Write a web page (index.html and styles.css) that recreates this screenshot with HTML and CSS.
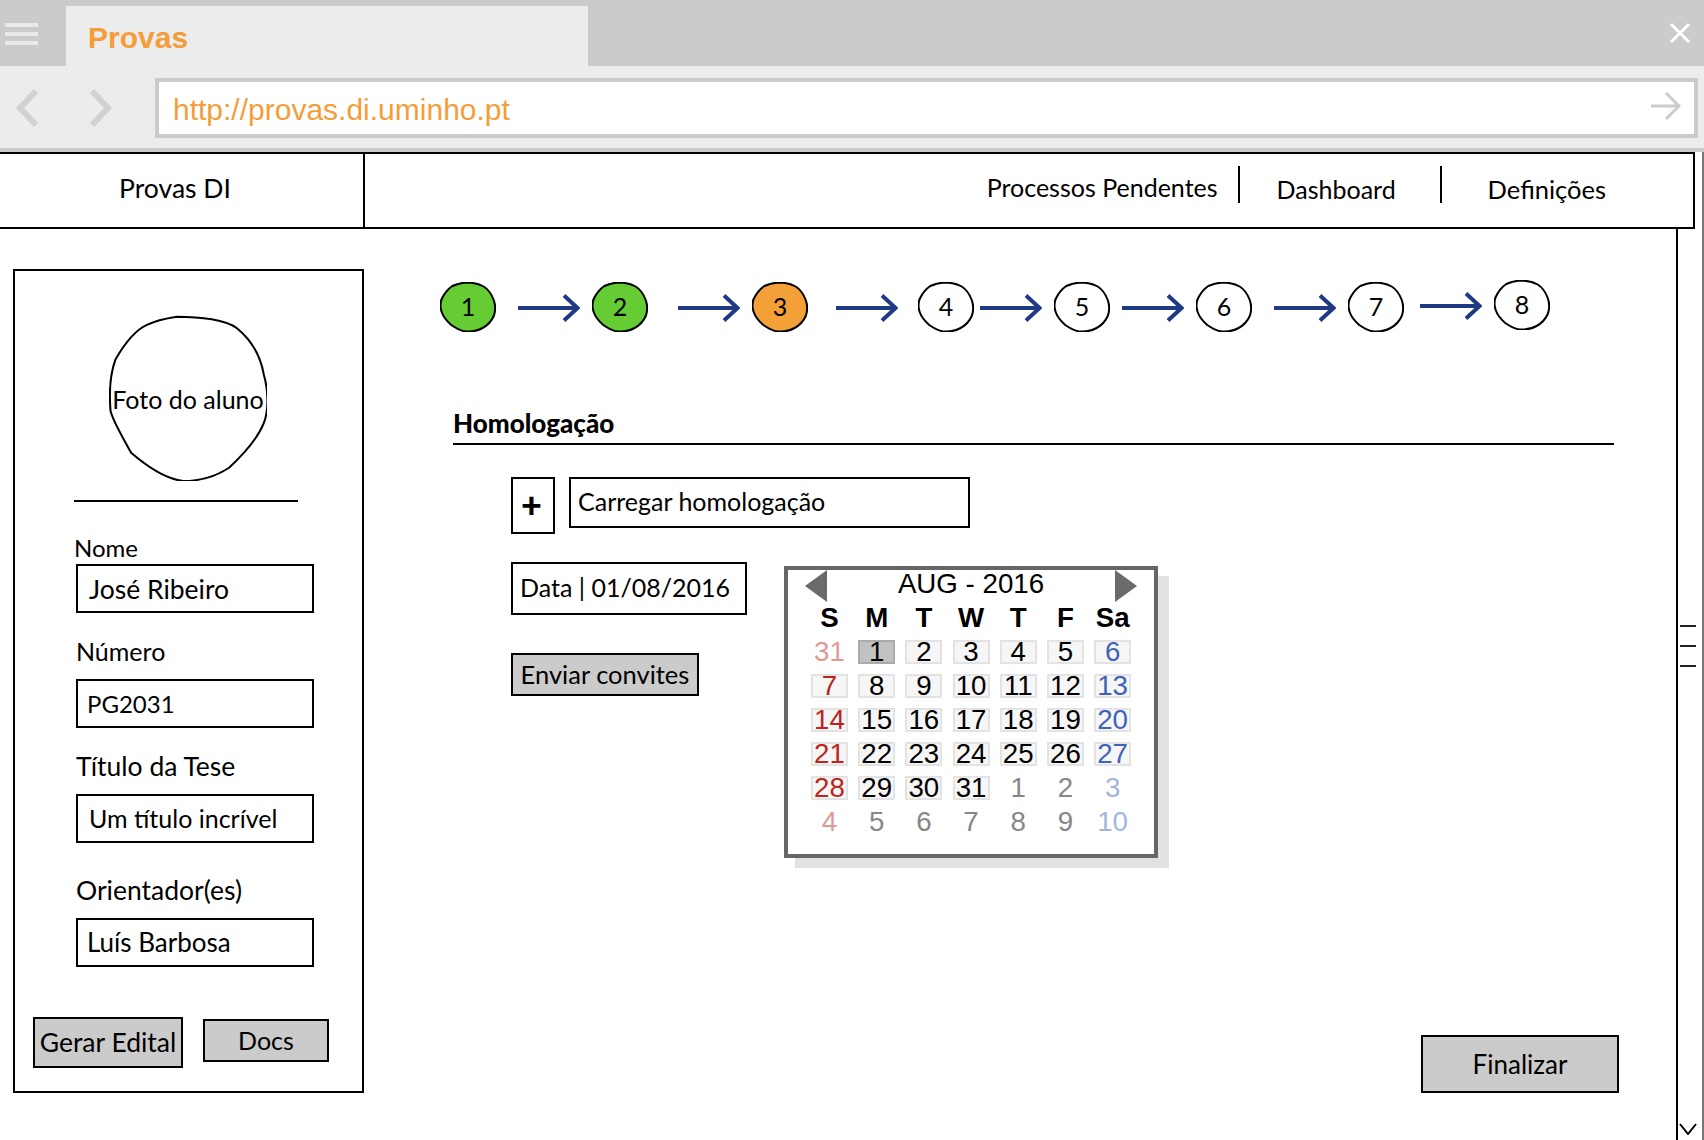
FILE: index.html
```html
<!DOCTYPE html>
<html lang="en">
<head>
    <meta charset="UTF-8">
    <meta name="viewport" content="width=device-width, initial-scale=1.0">
    <title>Provas</title>
    <link rel="stylesheet" href="styles.css">
</head>
<body>
    <svg class="defs" width="0" height="0">
        <symbol id="blob" viewBox="0 0 100 100" preserveAspectRatio="none">
            <path d="M43 1 C58 1 74 3 81 8 C90 15 96 25 98 36 C101 46 101 58 98 65 C94 75 85 84 76 92 C68 97 58 100 47 100 C37 99 25 92 14 83 C9 74 3 65 1 58 C0 47 1 35 4 27 C10 17 17 9 24 6 C30 3 36 2 43 1 Z" vector-effect="non-scaling-stroke"/>
        </symbol>
        <symbol id="dot" viewBox="0 0 100 100" preserveAspectRatio="none">
            <path d="M46 1 C58 1 70 4 78 9 C85 14 92 24 96 36 C99 46 100 56 96 68 C92 78 86 86 76 92 C68 97 58 100 46 99 C38 98 28 92 20 86 C12 78 6 70 3 60 C0 50 0 42 3 34 C8 22 14 14 22 8 C30 4 38 2 46 1 Z" vector-effect="non-scaling-stroke"/>
        </symbol>
        <symbol id="arrow" viewBox="0 0 62 28">
            <path d="M0 14 H59 M46 1.5 L59.5 14 L46 26.5" fill="none" stroke="#1f3a85" stroke-width="4"/>
        </symbol>
    </svg>

    <header class="browser">
        <div class="tabbar">
            <div class="menu"><span></span><span></span><span></span></div>
            <div class="tab">Provas</div>
            <svg class="close" width="22" height="22" viewBox="0 0 22 22">
                <path d="M2 2 L20 20 M20 2 L2 20" stroke="#fff" stroke-width="3"/>
            </svg>
        </div>
        <div class="toolbar">
            <svg class="nav-btn" width="24" height="38" viewBox="0 0 24 38">
                <path d="M21 2 L5 19 L21 36" fill="none" stroke="#d2d2d2" stroke-width="6"/>
            </svg>
            <svg class="nav-btn next" width="24" height="38" viewBox="0 0 24 38">
                <path d="M3 2 L19 19 L3 36" fill="none" stroke="#d2d2d2" stroke-width="6"/>
            </svg>
            <div class="address">
                <span class="url">http://provas.di.uminho.pt</span>
                <svg class="go" width="30" height="30" viewBox="0 0 30 30">
                    <path d="M0 15 H27 M15 2 L28 15 L15 28" fill="none" stroke="#ccc" stroke-width="3"/>
                </svg>
            </div>
        </div>
    </header>

    <div class="frame">
        <div class="scrollbar">
            <div class="grip"><span></span><span></span><span></span></div>
            <svg class="scroll-down" width="18" height="12" viewBox="0 0 18 12">
                <path d="M1 1 L9 11 L17 1" fill="none" stroke="#000" stroke-width="2"/>
            </svg>
        </div>

        <nav class="topnav">
            <div class="brand">Provas DI</div>
            <div class="links">
                <a class="link link-first">Processos Pendentes</a>
                <a class="link link-dash">Dashboard</a>
                <a class="link link-last">Definições</a>
            </div>
        </nav>

        <div class="content">
            <aside class="sidebar">
                <div class="photo">
                    <svg class="shape"><use href="#blob"/></svg>
                    <span>Foto do aluno</span>
                </div>
                <div class="rule"></div>

                <div class="field field-first">
                    <label class="small">Nome</label>
                    <div class="box large">José Ribeiro</div>
                </div>
                <div class="field">
                    <label>Número</label>
                    <div class="box small">PG2031</div>
                </div>
                <div class="field">
                    <label class="large">Título da Tese</label>
                    <div class="box">Um título incrível</div>
                </div>
                <div class="field field-last">
                    <label class="large">Orientador(es)</label>
                    <div class="box luis">Luís Barbosa</div>
                </div>

                <div class="side-buttons">
                    <button class="btn btn-edital">Gerar Edital</button>
                    <button class="btn btn-docs">Docs</button>
                </div>
            </aside>

            <main class="main">
                <div class="steps">
                    <div class="step done"><svg class="shape"><use href="#dot"/></svg><span>1</span></div>
                    <svg class="step-arrow a1"><use href="#arrow"/></svg>
                    <div class="step done"><svg class="shape"><use href="#dot"/></svg><span>2</span></div>
                    <svg class="step-arrow a2"><use href="#arrow"/></svg>
                    <div class="step current"><svg class="shape"><use href="#dot"/></svg><span>3</span></div>
                    <svg class="step-arrow a3"><use href="#arrow"/></svg>
                    <div class="step"><svg class="shape"><use href="#dot"/></svg><span>4</span></div>
                    <svg class="step-arrow a4"><use href="#arrow"/></svg>
                    <div class="step"><svg class="shape"><use href="#dot"/></svg><span>5</span></div>
                    <svg class="step-arrow a5"><use href="#arrow"/></svg>
                    <div class="step"><svg class="shape"><use href="#dot"/></svg><span>6</span></div>
                    <svg class="step-arrow a6"><use href="#arrow"/></svg>
                    <div class="step"><svg class="shape"><use href="#dot"/></svg><span>7</span></div>
                    <svg class="step-arrow a7 raised"><use href="#arrow"/></svg>
                    <div class="step raised"><svg class="shape"><use href="#dot"/></svg><span>8</span></div>
                </div>

                <h2 class="section-title">Homologação</h2>

                <div class="upload">
                    <div class="plus">+</div>
                    <div class="box upload-name">Carregar homologação</div>
                </div>

                <div class="schedule">
                    <div class="schedule-left">
                        <div class="box date-box">Data | 01/08/2016</div>
                        <button class="btn btn-send">Enviar convites</button>
                    </div>

                    <div class="calendar">
                        <div class="cal-head">
                            <span class="tri tri-left"></span>
                            <span class="cal-title">AUG - 2016</span>
                            <span class="tri tri-right"></span>
                        </div>
                        <div class="cal-grid">
                            <b>S</b><b>M</b><b>T</b><b>W</b><b>T</b><b>F</b><b>Sa</b>
                            <span class="plain sun off">31</span><span class="day sel">1</span><span class="day">2</span><span class="day">3</span><span class="day">4</span><span class="day">5</span><span class="day sat">6</span>
                            <span class="day sun">7</span><span class="day">8</span><span class="day">9</span><span class="day">10</span><span class="day">11</span><span class="day">12</span><span class="day sat">13</span>
                            <span class="day sun">14</span><span class="day">15</span><span class="day">16</span><span class="day">17</span><span class="day">18</span><span class="day">19</span><span class="day sat">20</span>
                            <span class="day sun">21</span><span class="day">22</span><span class="day">23</span><span class="day">24</span><span class="day">25</span><span class="day">26</span><span class="day sat">27</span>
                            <span class="day sun">28</span><span class="day">29</span><span class="day">30</span><span class="day">31</span><span class="plain off">1</span><span class="plain off">2</span><span class="plain sat off">3</span>
                            <span class="plain sun off">4</span><span class="plain off">5</span><span class="plain off">6</span><span class="plain off">7</span><span class="plain off">8</span><span class="plain off">9</span><span class="plain sat off">10</span>
                        </div>
                    </div>
                </div>

                <button class="btn btn-finish">Finalizar</button>
            </main>
        </div>
    </div>
</body>
</html>
```

FILE: styles.css
```css
* {
    box-sizing: border-box;
}
body {
    margin: 0;
    height: 1140px;
    overflow: hidden;
    background-color: #fff;
    font-family: "Lato", sans-serif;
    font-size: 25px;
    color: #000;
}
.defs {
    position: absolute;
}
.small {
    font-size: 24px;
}
.large {
    font-size: 26.5px;
}

/* browser chrome */
.browser {
    height: 152px;
    font-family: "Liberation Sans", Arial, sans-serif;
}
.tabbar {
    height: 66px;
    display: flex;
    align-items: flex-end;
    background-color: #cbcbcb;
}
.menu {
    width: 66px;
    height: 66px;
    padding: 23px 0 0 5px;
}
.menu span {
    display: block;
    width: 33px;
    height: 4px;
    margin-bottom: 5px;
    background-color: #e9e9e9;
}
.tab {
    width: 522px;
    height: 60px;
    padding-left: 22px;
    background-color: #ececec;
    color: #f59d38;
    font-size: 30px;
    font-weight: bold;
    line-height: 64px;
}
.close {
    margin: 0 13px 22px auto;
}
.toolbar {
    height: 86px;
    display: flex;
    padding-top: 12px;
    background-color: #ececec;
    border-bottom: 4px solid #cbcbcb;
    box-shadow: 0 2px 0 #fff;
}
.nav-btn {
    margin: 11px 0 0 15px;
}
.nav-btn.next {
    margin-left: 50px;
}
.address {
    width: 1543px;
    height: 60px;
    margin-left: 42px;
    padding: 0 13px 0 14px;
    display: flex;
    align-items: center;
    justify-content: space-between;
    background-color: #fff;
    border: 4px solid #cbcbcb;
    color: #f59d38;
    font-size: 30px;
}
.url {
    padding-top: 4px;
}
.go {
    margin-bottom: 4px;
}

/* page frame */
.frame {
    position: relative;
    height: 988px;
}
.scrollbar {
    position: absolute;
    top: 0;
    bottom: 0;
    left: 1676px;
    width: 28px;
    border-left: 2px solid #000;
    border-right: 2px solid #777;
}
.grip {
    position: absolute;
    top: 473px;
    left: 2px;
}
.grip span {
    display: block;
    width: 16px;
    height: 2px;
    margin-bottom: 18px;
    background-color: #222;
}
.scroll-down {
    position: absolute;
    left: 1px;
    bottom: 5px;
}

.topnav {
    position: relative;
    width: 1695px;
    height: 77px;
    display: flex;
    background-color: #fff;
    border: 2px solid #000;
    border-left: 0;
}
.brand {
    width: 365px;
    padding: 0 13px 6px 0;
    display: flex;
    align-items: center;
    justify-content: center;
    border-right: 2px solid #000;
    font-size: 26.5px;
}
.links {
    flex: 1;
    display: flex;
    align-items: flex-start;
    justify-content: flex-end;
    padding: 12px 87px 0 0;
}
.link {
    height: 37px;
    line-height: 46px;
}
.link-first {
    padding-right: 20px;
    border-right: 2px solid #000;
    line-height: 42px;
}
.link-dash {
    width: 202px;
    padding-left: 37px;
    border-right: 2px solid #000;
}
.link-last {
    padding-left: 46px;
    font-size: 25.5px;
}

.content {
    display: flex;
    height: 864px;
    padding: 40px 0 0 13px;
}

/* student card */
.sidebar {
    width: 351px;
    height: 824px;
    padding: 44px 0 0 61px;
    border: 2px solid #000;
}
.photo {
    position: relative;
    width: 158px;
    height: 166px;
    margin-left: 33px;
    display: flex;
    align-items: center;
    justify-content: center;
}
.photo span {
    position: relative;
    padding-top: 2px;
    white-space: nowrap;
}
.shape {
    position: absolute;
    top: 0;
    left: 0;
    width: 100%;
    height: 100%;
    overflow: visible;
    fill: transparent;
    stroke: #000;
    stroke-width: 2px;
}
.rule {
    width: 224px;
    height: 2px;
    margin: 19px 0 0 -2px;
    background-color: #000;
}
.field {
    margin-top: 26px;
}
.field label {
    display: block;
    height: 28px;
    margin-bottom: 12px;
    line-height: 24px;
    white-space: nowrap;
}
.field-first {
    margin-top: 34px;
}
.field-first label {
    margin: 0 0 0 -2px;
}
.field-last {
    margin-top: 35px;
}
.box {
    width: 238px;
    height: 49px;
    padding-left: 11px;
    line-height: 45px;
    border: 2px solid #000;
    white-space: nowrap;
}
.box.large {
    line-height: 47px;
}
.box.small {
    padding-left: 9px;
}
.box.luis {
    padding-left: 9px;
    font-size: 26px;
}
.side-buttons {
    display: flex;
    gap: 20px;
    margin: 50px 0 0 -43px;
}
.btn {
    padding: 0 0 2px;
    background-color: #cbcbcb;
    border: 2px solid #000;
    color: #000;
    font-family: inherit;
    font-size: 25px;
}
.btn-edital {
    width: 150px;
    height: 51px;
    font-size: 26.5px;
}
.btn-docs {
    width: 126px;
    height: 43px;
    margin-top: 2px;
}

/* main column */
.main {
    width: 1179px;
    margin-left: 76px;
    display: flex;
    flex-direction: column;
    padding-top: 13px;
}
.steps {
    display: flex;
    height: 50px;
}
.step {
    position: relative;
    flex: none;
    width: 56px;
    height: 50px;
    display: flex;
    align-items: center;
    justify-content: center;
}
.step span {
    position: relative;
    padding-bottom: 2px;
}
.step.done .shape {
    fill: #66cc33;
}
.step.current .shape {
    fill: #f4a038;
}
.step-arrow {
    flex: none;
    width: 62px;
    height: 28px;
    margin-top: 12px;
}
.a1 { margin-left: 22px; margin-right: 12px; }
.a2 { margin-left: 30px; margin-right: 12px; }
.a3 { margin-left: 28px; margin-right: 20px; }
.a4 { margin-left: 6px; margin-right: 12px; }
.a5 { margin-left: 12px; margin-right: 12px; }
.a6 { margin-left: 22px; margin-right: 12px; }
.a7 { margin-left: 16px; margin-right: 12px; }
.raised {
    margin-top: -2px;
}
.step-arrow.raised {
    margin-top: 10px;
}

.section-title {
    width: 1161px;
    height: 65px;
    margin: 48px 0 0 13px;
    padding-top: 27px;
    border-bottom: 2px solid #000;
    font-size: 26px;
    font-weight: 900;
    line-height: 32px;
}
.upload {
    display: flex;
    gap: 14px;
    margin: 32px 0 0 71px;
}
.plus {
    width: 44px;
    height: 57px;
    border: 2px solid #000;
    font-size: 36px;
    font-weight: 900;
    line-height: 51px;
    text-align: center;
    padding-right: 3px;
}
.upload-name {
    width: 401px;
    height: 51px;
    padding-left: 7px;
    line-height: 44px;
}
.schedule {
    display: flex;
    margin: 28px 0 0 71px;
}
.schedule-left {
    width: 273px;
}
.date-box {
    width: 236px;
    height: 53px;
    padding-left: 7px;
    line-height: 46px;
}
.btn-send {
    display: block;
    width: 188px;
    height: 43px;
    margin-top: 38px;
    font-size: 25.5px;
}

/* calendar */
.calendar {
    width: 374px;
    height: 292px;
    margin-top: 4px;
    border: 4px solid #666;
    background-color: #fff;
    box-shadow: 11px 10px 0 #e2e2e2;
    font-family: "Liberation Sans", Arial, sans-serif;
    font-size: 27.7px;
}
.cal-head {
    position: relative;
    height: 32px;
    line-height: 28px;
    text-align: center;
}
.tri {
    position: absolute;
    top: 0;
    width: 0;
    height: 0;
    border-top: 16px solid transparent;
    border-bottom: 16px solid transparent;
}
.tri-left {
    left: 17px;
    border-right: 22px solid #6a6a6a;
}
.tri-right {
    left: 327px;
    border-left: 22px solid #6a6a6a;
}
.cal-grid {
    display: grid;
    grid-template-columns: repeat(7, 37px);
    grid-auto-rows: 24px;
    column-gap: 10.2px;
    row-gap: 10px;
    margin: 4px 0 0 23px;
    line-height: 24px;
    text-align: center;
}
.cal-grid b,
.cal-grid .plain {
    display: block;
}
.cal-grid b {
    margin-bottom: 2px;
}
.day {
    background-color: #f6f6f6;
    border: 2px solid #e3e3e3;
    line-height: 20px;
}
.day.sel {
    background-color: #c2c2c2;
    border-color: #ababab;
}
.sun {
    color: #bd251c;
}
.sat {
    color: #3f63b6;
}
.off {
    color: #878787;
}
.sun.off {
    color: #e09a95;
}
.sat.off {
    color: #a3b6de;
}

.btn-finish {
    align-self: flex-end;
    width: 198px;
    height: 58px;
    margin: auto 0 0;
    padding: 0;
    font-size: 26px;
}
```
